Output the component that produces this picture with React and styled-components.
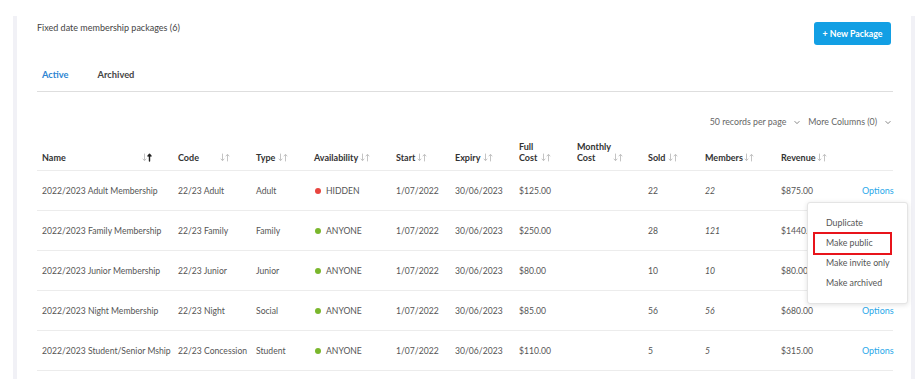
import React from "react";
import styled, { createGlobalStyle } from "styled-components";

const GlobalStyle = createGlobalStyle`
  body {
    margin: 0;
    background: #ffffff;
    font-family: Lato, "Open Sans", Arial, sans-serif;
    color: #555;
  }
`;

const Page = styled.div`
  padding-top: 16px;
`;

const Card = styled.div`
  margin-left: 13px;
  border-left: 4px solid #f1f1f6;
  border-right: 4px solid #f1f1f6;
  padding: 6px 18px 8px 20px;
  background: #fff;
`;

const HeaderRow = styled.div`
  display: flex;
  justify-content: space-between;
  align-items: flex-start;
`;

const Title = styled.div`
  font-size: 9px;
  line-height: 12px;
  color: #444;
`;

const NewButton = styled.button`
  margin-right: 2px;
  width: 77px;
  height: 23px;
  border: none;
  border-radius: 3px;
  background: #129fe4;
  color: #fff;
  font-family: inherit;
  font-size: 8.8px;
  font-weight: 700;
  padding: 0;
  cursor: pointer;
`;

const Tabs = styled.div`
  display: flex;
  margin-top: 24px;
  border-bottom: 1px solid #dedede;
`;

const Tab = styled.div`
  padding: 0 5px 10px;
  margin-right: 19px;
  font-size: 9.3px;
  line-height: 12px;
  font-weight: 700;
  color: ${(p) => (p.$active ? "#2c84d2" : "#444")};
`;

const Toolbar = styled.div`
  display: flex;
  justify-content: flex-end;
  gap: 8px;
  margin-top: 24px;
  padding-right: 2px;
  font-size: 8.8px;
  line-height: 12px;
  color: #666;
`;

const Select = styled.div`
  display: flex;
  align-items: center;
  gap: 8px;
`;

const Table = styled.table`
  width: 100%;
  border-collapse: collapse;
  table-layout: fixed;
  margin-top: 2px;
`;

const Col = styled.col`
  width: ${(p) => p.$w}px;
`;

const Th = styled.th`
  height: 33px;
  padding: 0 0 7px 5px;
  vertical-align: bottom;
  text-align: left;
  font-size: 9px;
  line-height: 11px;
  font-weight: 700;
  color: #333;
  border-bottom: 1px solid #ececec;
`;

const HeadInner = styled.div`
  display: flex;
  align-items: flex-end;
`;

const HeadLabel = styled.span`
  display: inline-block;
  width: ${(p) => p.$w}px;
  flex: none;
`;

const Td = styled.td`
  height: 39px;
  padding: 0 0 0 5px;
  font-size: 8.6px;
  color: #555;
  white-space: nowrap;
  border-bottom: 1px solid #ececec;
  font-style: ${(p) => (p.$italic ? "italic" : "normal")};
  font-synthesis: style;
  text-align: ${(p) => (p.$right ? "right" : "left")};
  position: ${(p) => (p.$anchor ? "relative" : "static")};
`;

const Dot = styled.span`
  display: inline-block;
  width: 6px;
  height: 6px;
  border-radius: 50%;
  margin: 0 5px 0 1px;
  vertical-align: 0;
  background: ${(p) => (p.$hidden ? "#e8453f" : "#7ab72c")};
`;

const OptionsLink = styled.a`
  color: #2aa9ea;
  font-size: 9px;
  cursor: pointer;
`;

const Menu = styled.div`
  position: absolute;
  top: 31px;
  right: -15px;
  z-index: 5;
  width: 99px;
  padding: 10px 0;
  background: #fff;
  border: 1px solid #e4e4e4;
  border-radius: 3px;
  box-shadow: 0 1px 5px rgba(0, 0, 0, 0.12);
  text-align: left;
`;

const MenuItem = styled.div`
  position: relative;
  height: 20px;
  line-height: 20px;
  padding-left: 18px;
  font-size: 8.8px;
  color: #555;
  ${(p) =>
    p.$marked &&
    `
    &::after {
      content: "";
      position: absolute;
      left: 5px;
      top: -1px;
      width: 75px;
      height: 19px;
      border: 2px solid #e8141b;
    }
  `}
`;

const SortIcon = ({ active }) => (
  <svg width="11" height="9" viewBox="0 0 11 9" style={{ flex: "none", marginBottom: 1 }}>
    <g fill="none" strokeWidth="1" strokeLinecap="round" strokeLinejoin="round">
      <path d="M2.5 1v6.5M1 6l1.5 1.7L4 6" stroke="#c4c4c4" />
      <path
        d="M7.5 8V1.5M6 3l1.5-1.7L9 3"
        stroke={active ? "#222" : "#c4c4c4"}
        strokeWidth={active ? 1.4 : 1}
      />
    </g>
  </svg>
);

const Chevron = () => (
  <svg width="6" height="5" viewBox="0 0 6 5">
    <path d="M0.6 1.2l2.4 2.4L5.4 1.2" fill="none" stroke="#777" strokeWidth="0.9" />
  </svg>
);

const columns = [
  { key: "name", label: "Name", w: 136, lw: 100, active: true },
  { key: "code", label: "Code", w: 78, lw: 42 },
  { key: "type", label: "Type", w: 58, lw: 22 },
  { key: "avail", label: "Availability", w: 82, lw: 46 },
  { key: "start", label: "Start", w: 59, lw: 21 },
  { key: "expiry", label: "Expiry", w: 64, lw: 28 },
  { key: "full", label: ["Full", "Cost"], w: 58, lw: 22 },
  { key: "monthly", label: ["Monthly", "Cost"], w: 71, lw: 36 },
  { key: "sold", label: "Sold", w: 57, lw: 20 },
  { key: "members", label: "Members", w: 76, lw: 39 },
  { key: "revenue", label: "Revenue", w: 81, lw: 36 },
];

const rows = [
  { name: "2022/2023 Adult Membership", code: "22/23 Adult", type: "Adult", hidden: true, full: "$125.00", sold: 22, members: 22, revenue: "$875.00" },
  { name: "2022/2023 Family Membership", code: "22/23 Family", type: "Family", full: "$250.00", sold: 28, members: 121, revenue: "$1440.00" },
  { name: "2022/2023 Junior Membership", code: "22/23 Junior", type: "Junior", full: "$80.00", sold: 10, members: 10, revenue: "$80.00" },
  { name: "2022/2023 Night Membership", code: "22/23 Night", type: "Social", full: "$85.00", sold: 56, members: 56, revenue: "$680.00" },
  { name: "2022/2023 Student/Senior Mship", code: "22/23 Concession", type: "Student", full: "$110.00", sold: 5, members: 5, revenue: "$315.00" },
];

export default function App() {
  return (
    <Page>
      <GlobalStyle />
      <Card>
        <HeaderRow>
          <Title>Fixed date membership packages (6)</Title>
          <NewButton>+ New Package</NewButton>
        </HeaderRow>

        <Tabs>
          <Tab $active>Active</Tab>
          <Tab>Archived</Tab>
        </Tabs>

        <Toolbar>
          <Select>
            50 records per page <Chevron />
          </Select>
          <Select>
            More Columns (0) <Chevron />
          </Select>
        </Toolbar>

        <Table>
          <colgroup>
            {columns.map((c) => (
              <Col key={c.key} $w={c.w} />
            ))}
            <Col $w={36} />
          </colgroup>
          <thead>
            <tr>
              {columns.map((c) => (
                <Th key={c.key}>
                  <HeadInner>
                    <HeadLabel $w={c.lw}>
                      {Array.isArray(c.label) ? (
                        <>
                          {c.label[0]}
                          <br />
                          {c.label[1]}
                        </>
                      ) : (
                        c.label
                      )}
                    </HeadLabel>
                    <SortIcon active={c.active} />
                  </HeadInner>
                </Th>
              ))}
              <Th />
            </tr>
          </thead>
          <tbody>
            {rows.map((r, i) => (
              <tr key={r.name}>
                <Td>{r.name}</Td>
                <Td>{r.code}</Td>
                <Td>{r.type}</Td>
                <Td>
                  <Dot $hidden={r.hidden} />
                  {r.hidden ? "HIDDEN" : "ANYONE"}
                </Td>
                <Td>1/07/2022</Td>
                <Td>30/06/2023</Td>
                <Td>{r.full}</Td>
                <Td />
                <Td>{r.sold}</Td>
                <Td $italic>{r.members}</Td>
                <Td>{r.revenue}</Td>
                <Td $right $anchor={i === 0}>
                  {i !== 1 && i !== 2 && <OptionsLink>Options</OptionsLink>}
                  {i === 0 && (
                    <Menu>
                      <MenuItem>Duplicate</MenuItem>
                      <MenuItem $marked>Make public</MenuItem>
                      <MenuItem>Make invite only</MenuItem>
                      <MenuItem>Make archived</MenuItem>
                    </Menu>
                  )}
                </Td>
              </tr>
            ))}
          </tbody>
        </Table>
      </Card>
    </Page>
  );
}
